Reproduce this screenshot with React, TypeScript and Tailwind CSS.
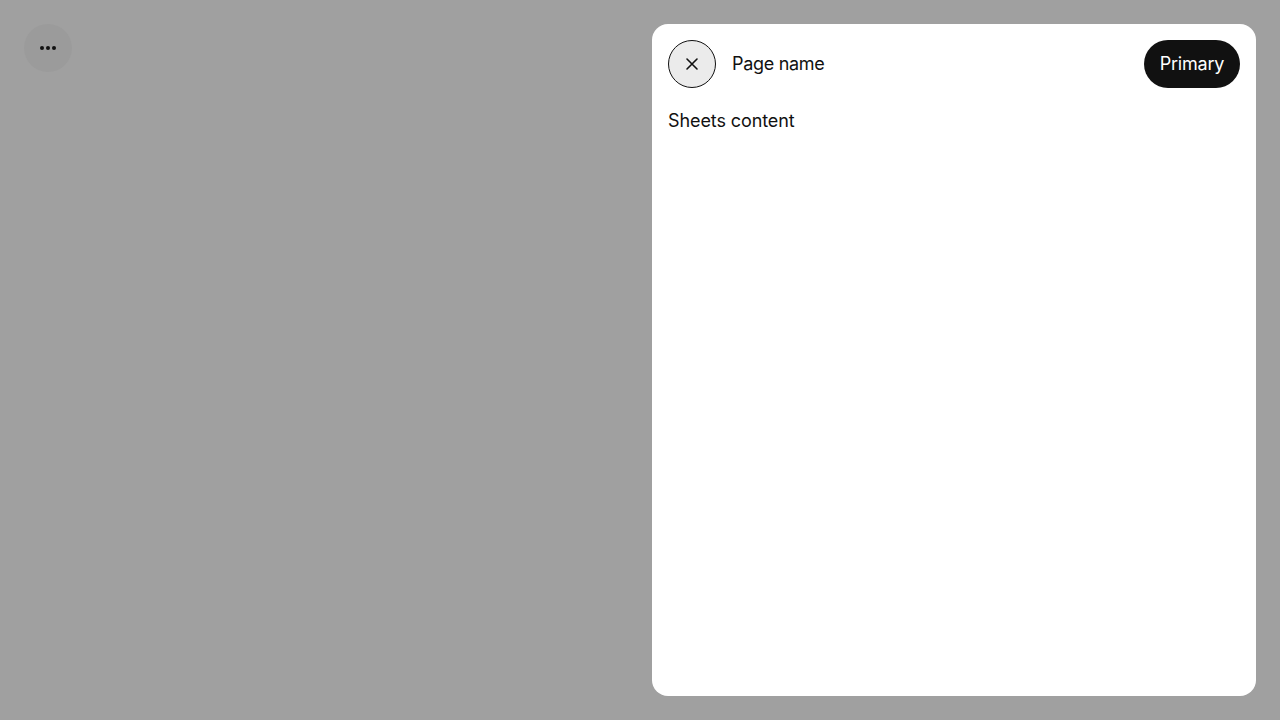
import React from "react";

function App() {
  return (
    <div
      className="flex h-[720px] w-[1280px] justify-between bg-[#a0a0a0] p-6 text-[#111111]"
      style={{ fontFamily: "Inter, 'Liberation Sans', sans-serif" }}
    >
      <button className="flex h-12 w-12 items-center justify-center rounded-full bg-[#9b9b9b]">
        <svg width="18" height="6" viewBox="0 0 18 6" fill="#111">
          <circle cx="3" cy="3" r="2" />
          <circle cx="9" cy="3" r="2" />
          <circle cx="15" cy="3" r="2" />
        </svg>
      </button>
      <div className="flex w-[604px] flex-col rounded-2xl bg-white p-4">
        <div className="flex h-12 items-center">
          <button className="flex h-12 w-12 items-center justify-center rounded-full border border-[#111] bg-[#ebebeb]">
            <svg width="14" height="14" viewBox="0 0 14 14" stroke="#111" strokeWidth="1.6" strokeLinecap="round">
              <path d="M2 2 L12 12 M12 2 L2 12" />
            </svg>
          </button>
          <span className="ml-4 text-lg tracking-[-0.3px]">Page name</span>
          <button className="ml-auto h-12 w-24 rounded-full bg-[#111111] text-lg tracking-[-0.2px] text-white">
            Primary
          </button>
        </div>
        <div className="mt-[21px] text-lg leading-6 tracking-[-0.1px]">Sheets content</div>
      </div>
    </div>
  );
}

export default App;
